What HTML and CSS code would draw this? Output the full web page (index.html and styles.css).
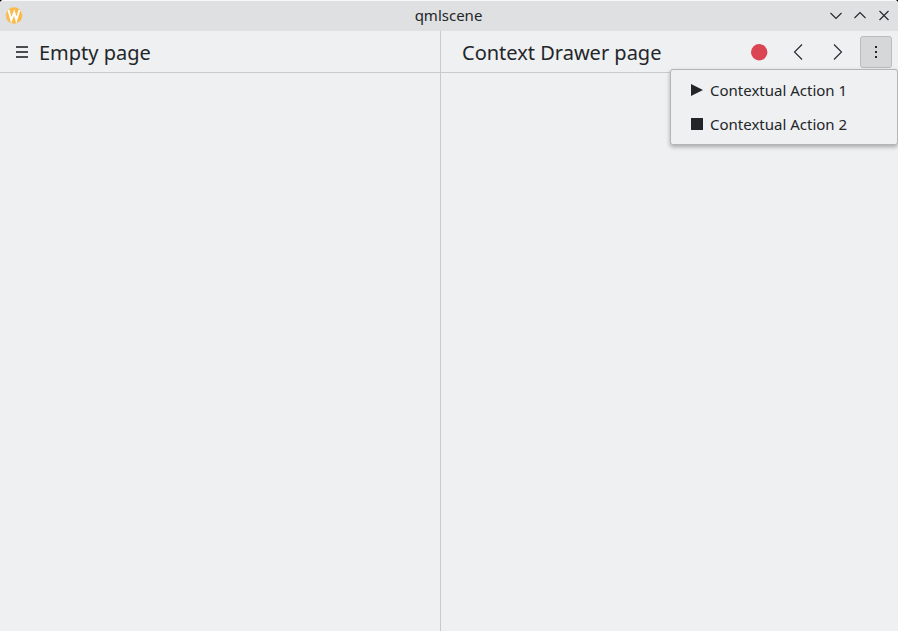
FILE: index.html
```html
<!DOCTYPE html>
<html lang="en">
<head>
<meta charset="utf-8">
<title>qmlscene</title>
<link rel="stylesheet" href="styles.css">
</head>
<body>
<div class="window">
  <header class="titlebar">
    <svg class="logo" viewBox="0 0 18 18" aria-hidden="true">
      <defs><linearGradient id="gold" x1="0" y1="0" x2="1" y2="0"><stop offset="0" stop-color="#f9bd55"/><stop offset="1" stop-color="#fbb944"/></linearGradient></defs>
      <circle cx="9" cy="8.500" r="8.300" fill="url(#gold)"/>
      <path d="M3.500 3 6.300 13 9.200 5.500 11.300 13 14.500 3" fill="none" stroke="#fff" stroke-width="2"/>
    </svg>
    <span class="caption">qmlscene</span>
    <div class="controls">
      <button type="button" aria-label="Minimize"><svg viewBox="0 0 16 16"><path d="M2.500 5 8 10.500 13.500 5"/></svg></button>
      <button type="button" aria-label="Maximize"><svg viewBox="0 0 16 16"><path d="M2.500 10 8 4.500l5.500 5.500"/></svg></button>
      <button type="button" aria-label="Close"><svg viewBox="0 0 16 16"><path d="m3.500 3 9 9m0-9-9 9"/></svg></button>
    </div>
  </header>
  <main class="pages">
    <section class="page">
      <div class="toolbar">
        <button type="button" class="drawer" aria-label="Open menu"><svg viewBox="0 0 12 12"><path d="M0 0h12v2H0zM0 5h12v2H0zM0 10h12v2H0z"/></svg></button>
        <h1>Empty page</h1>
      </div>
    </section>
    <section class="page context">
      <div class="toolbar">
        <h1>Context Drawer page</h1>
        <div class="actions">
          <button type="button" class="tool" aria-label="Record"><svg viewBox="0 0 22 22"><circle cx="11.200" cy="11.200" r="8.200" fill="#da4453"/></svg></button>
          <button type="button" class="tool" aria-label="Previous"><svg viewBox="0 0 22 22"><path class="line" d="M15 3.500 7.500 11l7.500 7.500"/></svg></button>
          <button type="button" class="tool" aria-label="Next"><svg viewBox="0 0 22 22"><path class="line" d="m8 3.500 7.500 7.500L8 18.500"/></svg></button>
          <div class="overflow">
            <button type="button" class="tool pressed" aria-label="More actions" aria-expanded="true"><svg viewBox="0 0 22 22"><path fill="#232629" d="M10 5h2v2h-2zM10 10h2v2h-2zM10 15h2v2h-2z"/></svg></button>
            <div class="menu" role="menu">
              <button type="button" role="menuitem"><svg viewBox="0 0 12 12"><path d="M0 0 12 6 0 12z"/></svg>Contextual Action 1</button>
              <button type="button" role="menuitem"><svg viewBox="0 0 12 12"><path d="M0 0h12v12H0z"/></svg>Contextual Action 2</button>
            </div>
          </div>
        </div>
      </div>
    </section>
  </main>
</div>
</body>
</html>
```
FILE: styles.css
```css
* { box-sizing: border-box; }
body {
  margin: 0;
  background: #000;
  color: #232629;
  font-family: "Noto Sans", sans-serif;
  font-size: 15px;
}
button {
  padding: 0;
  border: 0;
  background: none;
  color: inherit;
  font: inherit;
}
svg { display: block; }
.window {
  display: flex;
  flex-direction: column;
  min-height: 100vh;
  background: #eff0f2;
  border-radius: 4px 4px 0 0;
}
.titlebar {
  display: grid;
  grid-template-columns: 1fr auto 1fr;
  align-items: center;
  height: 31px;
  padding: 0 6px 0 5px;
  background: #dee0e2;
  border-top: 1px solid #f8f8f9;
  border-radius: 4px 4px 0 0;
}
.logo { width: 18px; height: 18px; }
.caption {
  padding-bottom: 2px;
  line-height: 20px;
}
.controls {
  display: flex;
  justify-content: flex-end;
  gap: 8px;
}
.controls svg {
  width: 16px;
  height: 16px;
  fill: none;
  stroke: #232629;
  stroke-width: 1.1;
}
.pages {
  display: grid;
  flex: 1;
  grid-template-columns: 440fr 458fr;
}
.context { border-left: 1px solid #c8cacc; }
.toolbar {
  display: flex;
  align-items: center;
  height: 42px;
  border-bottom: 1px solid #c8cacc;
}
.drawer { padding: 0 11px 0 16px; }
.drawer svg {
  width: 12px;
  height: 12px;
  fill: #4a4d50;
}
h1 {
  margin: 0;
  padding-top: 2px;
  font-size: 20px;
  font-weight: 400;
  line-height: 28px;
  white-space: nowrap;
}
.context h1 { padding-left: 21px; }
.actions {
  display: flex;
  gap: 7px;
  margin-left: auto;
  padding-right: 6px;
}
.tool {
  display: grid;
  place-items: center;
  width: 32px;
  height: 32px;
  border: 1px solid transparent;
  border-radius: 3px;
}
.tool svg { width: 22px; height: 22px; }
.line {
  fill: none;
  stroke: #232629;
  stroke-width: 1.1;
}
.pressed {
  background: #d6d7d9;
  border-color: #b9bbbd;
}
.overflow { position: relative; }
.menu {
  position: absolute;
  top: 33px;
  right: -6px;
  width: 228px;
  padding: 3px 0;
  background: #eff0f2;
  border: 1px solid #b3b5b7;
  border-radius: 3px;
  box-shadow: 0 2px 4px rgba(0, 0, 0, 0.3);
}
.menu button {
  display: flex;
  align-items: center;
  gap: 7px;
  width: 100%;
  height: 34px;
  padding-left: 20px;
  white-space: nowrap;
}
.menu svg {
  width: 12px;
  height: 12px;
  fill: #232629;
}
```
